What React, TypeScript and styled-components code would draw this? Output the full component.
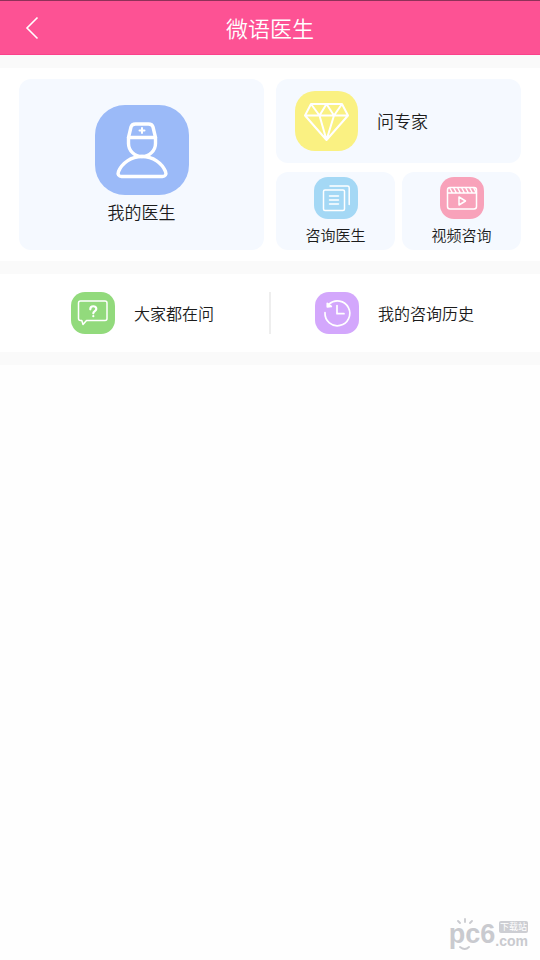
import React from "react";
import styled, { createGlobalStyle } from "styled-components";

const GlobalStyle = createGlobalStyle`
  *, *::before, *::after { box-sizing: border-box; }
  body {
    margin: 0;
    background: #fefefe;
    color: #1c1c1c;
    font-family: "Noto Sans CJK SC", sans-serif;
    font-weight: 350;
  }
  button { font: inherit; color: inherit; border: 0; margin: 0; padding: 0; cursor: pointer; }
`;

const Page = styled.div`
  position: relative;
  display: flex;
  flex-direction: column;
  min-height: 100vh;
`;

const Header = styled.header`
  display: grid;
  grid-template-columns: 64px 1fr 64px;
  align-items: center;
  height: 55px;
  color: #fff;
  background: #fd5294;
  border-top: 1px solid #8f3159;
  border-bottom: 1px solid #fb418b;
`;

const BackButton = styled.button`
  display: flex;
  align-items: center;
  justify-content: center;
  height: 48px;
  background: transparent;
`;

const Title = styled.h1`
  margin: 0;
  padding-bottom: 2px;
  font-size: 22px;
  font-weight: 350;
  line-height: 32px;
  text-align: center;
`;

const Main = styled.main`
  display: flex;
  flex-direction: column;
  gap: 13px;
  padding: 13px 0;
  background: #fafafa;
`;

const Services = styled.section`
  display: grid;
  grid-template-columns: 1fr 1fr;
  gap: 12px;
  padding: 11px 19px;
  background: #fff;
`;

const SideColumn = styled.div`
  display: flex;
  flex-direction: column;
  gap: 9px;
`;

const PairRow = styled.div`
  display: grid;
  grid-template-columns: 1fr 1fr;
  gap: 7px;
`;

const Card = styled.button`
  display: flex;
  flex-direction: column;
  align-items: center;
  background: #f5f9ff;
  border-radius: 12px;
`;

const FeatureCard = styled(Card)`
  justify-content: center;
  gap: 5px;
  padding-bottom: 1px;
`;

const WideCard = styled(Card)`
  flex-direction: row;
  gap: 19px;
  padding: 12px 19px;
`;

const SmallCard = styled(Card)`
  gap: 6px;
  padding: 5px 0;
`;

const Label = styled.span<{ $size: number }>`
  font-size: ${(p) => p.$size}px;
  line-height: ${(p) => (p.$size > 15 ? 24 : 20)}px;
  white-space: nowrap;
`;

const sizes = {
  small: { width: 44, height: 42, radius: 14 },
  medium: { width: 63, height: 60, radius: 20 },
  large: { width: 94, height: 90, radius: 30 },
};

const Tile = styled.span<{ $size: keyof typeof sizes; $color: string }>`
  display: block;
  flex: none;
  width: ${(p) => sizes[p.$size].width}px;
  height: ${(p) => sizes[p.$size].height}px;
  border-radius: ${(p) => sizes[p.$size].radius}px;
  background: ${(p) => p.$color};
  overflow: hidden;
`;

const Icon = styled.svg`
  display: block;
  width: 100%;
  height: 100%;
  fill: none;
  stroke: #fff;
  stroke-linecap: round;
  stroke-linejoin: round;
`;

const Links = styled.nav`
  display: grid;
  grid-template-columns: 1fr 1fr;
  padding: 18px 27px;
  background: #fff;
`;

const LinkItem = styled.button`
  display: flex;
  align-items: center;
  padding-left: 44px;
  gap: 19px;
  background: transparent;

  & + & { border-left: 2px solid #eee; margin-left: -1px; }
`;

const Watermark = styled.div`
  position: absolute;
  right: 12px;
  bottom: 12px;
  display: flex;
  align-items: flex-end;
  color: #c9cacf;
  font-family: "Liberation Sans", sans-serif;
  font-weight: 700;
`;

const Brand = styled.span`
  position: relative;
  font-size: 27px;
  line-height: 28px;
`;

const Mascot = styled.svg`
  position: absolute;
  left: 0;
  top: -2px;
  width: 46px;
  height: 34px;
  fill: none;
  stroke: #c9cacf;
  stroke-linecap: round;
`;

const Domain = styled.span`
  display: flex;
  flex-direction: column;
  align-items: flex-end;
  gap: 1px;
  font-size: 14px;
  line-height: 14px;
`;

const Badge = styled.span`
  padding: 0 1px;
  border-radius: 2px;
  background: #cdced3;
  color: #fff;
  font-family: "Noto Sans CJK SC", sans-serif;
  font-size: 9px;
  font-weight: 400;
  line-height: 12px;
`;

export default function App() {
  return (
    <>
      <GlobalStyle />
      <Page>
        <Header>
          <BackButton aria-label="返回">
            <svg width="14" height="24" viewBox="0 0 14 24" fill="none" stroke="#fff" strokeWidth="1.6">
              <path d="M12.5 1.5 2 12l10.5 10.5" />
            </svg>
          </BackButton>
          <Title>微语医生</Title>
        </Header>
        <Main>
          <Services>
            <FeatureCard>
              <Tile $size="large" $color="#9bbaf8">
                <Icon viewBox="0 0 94 90" strokeWidth="3.4">
                  <path d="M33.5 32.5 36 22q.8-3 4.5-3h13q3.7 0 4.5 3l2.500 10.500v6c0 7-6 13-13.500 13s-13.500-6-13.500-13Z" />
                  <path d="M33.500 32.500h27M47 51.500c-11 0-20 6.500-23.500 15-1.200 3 .5 5 3 5h41c2.500 0 4.200-2 3-5-3.500-8.500-12.500-15-23.500-15Z" />
                  <path d="M47 23v5M44.500 25.500h5" strokeWidth="2" />
                </Icon>
              </Tile>
              <Label $size={17}>我的医生</Label>
            </FeatureCard>
            <SideColumn>
              <WideCard>
                <Tile $size="medium" $color="#faf182">
                  <Icon viewBox="0 0 63 60" strokeWidth="2">
                    <path d="M16 13h31l6 11.500L31.500 49 10 24.500ZM10 24.500h43M16 13l8.500 11.500L31.500 13l7.500 11.500L47 13M24.500 24.500l7 24.500L39 24.500" />
                  </Icon>
                </Tile>
                <Label $size={17}>问专家</Label>
              </WideCard>
              <PairRow>
                <SmallCard>
                  <Tile $size="small" $color="#a4d8f5">
                    <Icon viewBox="0 0 44 42" strokeWidth="1.5">
                      <rect x="9.500" y="13" width="21" height="20.500" rx="1.500" />
                      <path d="M16 9h17.500q1.700 0 1.700 1.700V27.500M15.500 19h9M15.500 23h9M15.500 27h9" />
                    </Icon>
                  </Tile>
                  <Label $size={15}>咨询医生</Label>
                </SmallCard>
                <SmallCard>
                  <Tile $size="small" $color="#f8a2ba">
                    <Icon viewBox="0 0 44 42" strokeWidth="1.500">
                      <rect x="7.500" y="10.500" width="29" height="21.500" rx="2.500" />
                      <path d="M8 16h28.500M10 11.500l2.200 4M14 11.500l2.200 4M18 11.500l2.200 4M22 11.500l2.200 4M26 11.500l2.200 4M30 11.500l2.200 4M34 11.500l2 4M19 20v8l6.500-4Z" />
                    </Icon>
                  </Tile>
                  <Label $size={15}>视频咨询</Label>
                </SmallCard>
              </PairRow>
            </SideColumn>
          </Services>
          <Links>
            <LinkItem>
              <Tile $size="small" $color="#92da7c">
                <Icon viewBox="0 0 44 42" strokeWidth="1.500">
                  <path d="M9.500 9H34q2 0 2 2v15.500q0 2-2 2H15.500L12 32.500l-1.200-4H9.500q-2 0-2-2V11q0-2 2-2Z" />
                  <path d="M19.300 17.300c0-4 6-4 6-.3 0 2.200-3 2-3 4.300M22.300 24v.2" strokeWidth="2.200" />
                </Icon>
              </Tile>
              <Label $size={16}>大家都在问</Label>
            </LinkItem>
            <LinkItem>
              <Tile $size="small" $color="#d3a7fc">
                <Icon viewBox="0 0 44 42" strokeWidth="1.700">
                  <path d="M10 20.700A12.400 12.400 0 1 0 14 12.200" />
                  <path d="M12.300 11.300v3.500l4-.3Z" fill="#fff" />
                  <path d="M22 13.500V21.700h7" />
                </Icon>
              </Tile>
              <Label $size={16}>我的咨询历史</Label>
            </LinkItem>
          </Links>
        </Main>
        <Watermark>
          <Brand>
            pc6
            <Mascot viewBox="0 0 46 34" aria-hidden="true">
              <path d="M11 5 9 3M16 4V1M21 5l2-2M11 29q5 4 9 0" strokeWidth="1.800" />
            </Mascot>
          </Brand>
          <Domain>
            <Badge>下载站</Badge>
            <span>.com</span>
          </Domain>
        </Watermark>
      </Page>
    </>
  );
}
